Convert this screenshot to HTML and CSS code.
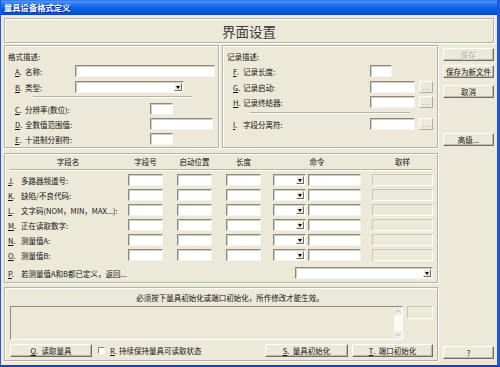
FILE: index.html
```html
<!DOCTYPE html>
<html lang="zh-CN">
<head>
<meta charset="utf-8">
<title>量具设备格式定义</title>
<link rel="stylesheet" href="styles.css">
</head>
<body>
<div class="window">
  <div class="titlebar">量具设备格式定义</div>
  <div class="client">
    <div class="banner">界面设置</div>
    <div class="main">
      <div class="left">
        <div class="top-row">
          <div class="group fmt">
            <div class="gtitle">格式描述:</div>
            <div class="frow mt3"><span class="key"><u>A</u>.</span><span class="lbl-a">名称:</span><div class="field w140"></div></div>
            <div class="frow mt4"><span class="key"><u>B</u>.</span><span class="lbl-a">类型:</span><div class="field sel w109"><span class="arrow"></span></div></div>
            <div class="sep sep-fmt"></div>
            <div class="frow mt5"><span class="key"><u>C</u>.</span><span class="lbl-c">分辨率(数位):</span><div class="field w23"></div></div>
            <div class="frow mt3"><span class="key"><u>D</u>.</span><span class="lbl-c">全数值范围值:</span><div class="field w63"></div></div>
            <div class="frow mt3"><span class="key"><u>E</u>.</span><span class="lbl-c">十进制分割符:</span><div class="field w23"></div></div>
          </div>
          <div class="group rec">
            <div class="gtitle rtitle">记录描述:</div>
            <div class="frow mt3"><span class="key"><u>F</u>.</span><span class="lbl-r">记录长度:</span><div class="field w22"></div></div>
            <div class="frow mt4"><span class="key"><u>G</u>.</span><span class="lbl-r">记录启动:</span><div class="field w45"></div><div class="dots">...</div></div>
            <div class="frow mt3"><span class="key"><u>H</u>.</span><span class="lbl-r">记录终结器:</span><div class="field w45"></div><div class="dots">...</div></div>
            <div class="sep sep-rec"></div>
            <div class="frow mt4"><span class="key"><u>I</u>.</span><span class="lbl-r">字段分离符:</span><div class="field w45"></div><div class="dots">...</div></div>
          </div>
        </div>

        <div class="group table">
          <div class="thead">
            <span class="h h-name">字段名</span>
            <span class="h h-35">字段号</span>
            <span class="h h-35">启动位置</span>
            <span class="h h-35">长度</span>
            <span class="h h-cmd">命令</span>
            <span class="h h-samp">取样</span>
          </div>
          <div class="tline"></div>
          <div class="tgrid">
            <div class="tlabel"><span class="tkey"><u>J</u>.</span>多路器频道号:</div>
            <div class="field w35"></div><div class="field w35"></div><div class="field w35"></div>
            <div class="field sel w33"><span class="arrow"></span></div><div class="field w53"></div><div class="field off w61"></div>

            <div class="tlabel"><span class="tkey"><u>K</u>.</span>缺陷/不良代码:</div>
            <div class="field w35"></div><div class="field w35"></div><div class="field w35"></div>
            <div class="field sel w33"><span class="arrow"></span></div><div class="field w53"></div><div class="field off w61"></div>

            <div class="tlabel"><span class="tkey"><u>L</u>.</span>文字码(NOM，MIN，MAX...):</div>
            <div class="field w35"></div><div class="field w35"></div><div class="field w35"></div>
            <div class="field sel w33"><span class="arrow"></span></div><div class="field w53"></div><div class="field off w61"></div>

            <div class="tlabel"><span class="tkey"><u>M</u>.</span>正在读取数字:</div>
            <div class="field w35"></div><div class="field w35"></div><div class="field w35"></div>
            <div class="field sel w33"><span class="arrow"></span></div><div class="field w53"></div><div class="field off w61"></div>

            <div class="tlabel"><span class="tkey"><u>N</u>.</span>测量值A:</div>
            <div class="field w35"></div><div class="field w35"></div><div class="field w35"></div>
            <div class="field sel w33"><span class="arrow"></span></div><div class="field w53"></div><div class="field off w61"></div>

            <div class="tlabel"><span class="tkey"><u>O</u>.</span>测量值B:</div>
            <div class="field w35"></div><div class="field w35"></div><div class="field w35"></div>
            <div class="field sel w33"><span class="arrow"></span></div><div class="field w53"></div><div class="field off w61"></div>
          </div>
          <div class="prow">
            <span class="tkey"><u>P</u>.</span><span class="ptext">若测量值A和B都已定义，返回...</span>
            <div class="field sel w138"><span class="arrow"></span></div>
          </div>
        </div>

        <div class="group bottom">
          <div class="msg">必须按下量具初始化或端口初始化，所作修改才能生效。</div>
          <div class="log-row">
            <div class="log">
              <div class="log-area"></div>
              <div class="vscroll">
                <div class="sbtn"><svg width="6" height="4" viewBox="0 0 6 4"><path d="M0.5 3.5 L3 1 L5.5 3.5" fill="none" stroke="#b8b8c8" stroke-width="1"/></svg></div>
                <div class="strack"></div>
                <div class="sbtn"><svg width="6" height="4" viewBox="0 0 6 4"><path d="M0.5 0.5 L3 3 L5.5 0.5" fill="none" stroke="#b8b8c8" stroke-width="1"/></svg></div>
              </div>
            </div>
            <div class="field off smallbox"></div>
          </div>
          <div class="btn-row">
            <div class="btn b-read"><u>Q</u>.&nbsp; 读取量具</div>
            <div class="check"></div>
            <span class="ckey"><u>R</u>.</span><span class="ctext">持续保持量具可读取状态</span>
            <div class="btn b-init"><u>S</u>.&nbsp; 量具初始化</div>
            <div class="btn b-port"><u>T</u>.&nbsp; 端口初始化</div>
          </div>
        </div>
      </div>

      <div class="side">
        <div class="btn disabled s-save">保存</div>
        <div class="btn s-saveas">保存为新文件</div>
        <div class="btn s-cancel">取消</div>
        <div class="btn s-adv">高级...</div>
        <div class="btn s-help">?</div>
      </div>
    </div>
  </div>
</div>
</body>
</html>
```
FILE: styles.css
```css
* { box-sizing: border-box; }
html, body { margin: 0; padding: 0; }
body {
  width: 500px;
  height: 367px;
  overflow: hidden;
  background: #ECE9D8;
  font-family: "Noto Sans CJK SC", "Noto Sans", sans-serif;
  font-size: 7.5px;
  color: #111;
}
u { text-decoration: underline; text-underline-offset: 1px; }

.window {
  width: 500px;
  height: 367px;
  display: flex;
  flex-direction: column;
  border-left: 1px solid #1c5ad8;
  border-right: 3px solid #1a5ad9;
  border-bottom: 2px solid #0c45c6;
}
.titlebar {
  flex: none;
  height: 15px;
  padding-left: 3px;
  line-height: 15px;
  color: #fff;
  font-weight: bold;
  font-size: 8.3px;
  text-shadow: 1px 1px 0 #0a2a8a;
  background: linear-gradient(to bottom, #2a74ee 0%, #4d97fb 12%, #2c7af4 25%, #0a5ee6 55%, #0655e0 85%, #0347c8 100%);
}
.client {
  flex: 1;
  display: flex;
  flex-direction: column;
  gap: 2px;
  padding: 3px 3px 4px 3px;
}
.banner {
  flex: none;
  height: 25px;
  display: flex;
  align-items: center;
  justify-content: center;
  font-size: 13.5px;
  color: #3a3a3a;
  border: 1px solid #b6b3a4;
  box-shadow: inset 1px 1px 0 #fff, 1px 1px 0 #fff;
}
.main {
  flex: 1;
  display: grid;
  grid-template-columns: 434px 51px;
  column-gap: 5px;
}
.left { display: flex; flex-direction: column; }
.top-row { display: flex; gap: 3px; height: 103px; flex: none; }

.group {
  border: 1px solid #b6b3a4;
  box-shadow: inset 1px 1px 0 #fff, 1px 1px 0 #fff;
}
.fmt { width: 215px; }
.rec { width: 216px; }
.table { height: 130px; margin-top: 5px; flex: none; }
.bottom { height: 74px; margin-top: 4px; flex: none; }

.gtitle { height: 10px; line-height: 10px; margin: 6px 0 0 3px; }
.rtitle { margin-left: 4px; }

.frow { display: flex; align-items: center; height: 12px; margin-left: 10px; }
.mt3 { margin-top: 3px; }
.mt4 { margin-top: 4px; }
.mt5 { margin-top: 5px; }
.key { width: 10px; flex: none; }
.lbl-a { width: 50px; flex: none; }
.lbl-c { width: 125px; flex: none; }
.lbl-r { width: 127px; flex: none; }

.sep { height: 2px; border-top: 1px solid #b6b3a4; border-bottom: 1px solid #fff; }
.sep-fmt { margin: 3px 0 0 28px; width: 159px; }
.sep-rec { margin: 4px 0 0 27px; width: 160px; }

.field {
  flex: none;
  height: 12px;
  background: #fff;
  border: 1px solid;
  border-color: #8d8a7e #f4f3ee #f4f3ee #8d8a7e;
  box-shadow: inset 1px 1px 0 #cfccc0;
}
.field.off { background: #ECE9D8; border-color: #c9c6b8 #fff #fff #c9c6b8; box-shadow: none; }
.sel { display: flex; justify-content: flex-end; padding: 1px; }
.arrow {
  width: 8px;
  height: 100%;
  display: flex;
  align-items: center;
  justify-content: center;
  background: #ECE9D8;
  border: 1px solid;
  border-color: #fff #6f6d64 #6f6d64 #fff;
}
.arrow::after {
  content: "";
  border-left: 2.5px solid transparent;
  border-right: 2.5px solid transparent;
  border-top: 3px solid #000;
}
.w22 { width: 22px; }
.w23 { width: 23px; }
.w33 { width: 33px; }
.w35 { width: 35px; }
.w45 { width: 45px; }
.w53 { width: 53px; }
.w61 { width: 61px; }
.w63 { width: 63px; }
.w109 { width: 109px; }
.w138 { width: 138px; }
.w140 { width: 140px; }

.dots {
  flex: none;
  width: 14px;
  height: 12px;
  margin-left: 4px;
  display: flex;
  align-items: center;
  justify-content: center;
  color: #9a988e;
  font-size: 7px;
  letter-spacing: 0.5px;
  border: 1px solid;
  border-color: #fff #b0ad9f #b0ad9f #fff;
}

.thead {
  display: flex;
  height: 10px;
  line-height: 10px;
  margin: 3px 0 0 3px;
}
.h { text-align: center; flex: none; }
.h-name { width: 120px; }
.h-35 { width: 35px; margin-right: 14px; }
.h-35:nth-child(4) { margin-right: 12px; }
.h-cmd { width: 88px; margin-right: 11px; }
.h-samp { width: 61px; }
.tline { margin: 2px 5px 0 5px; height: 2px; border-top: 1px solid #b6b3a4; border-bottom: 1px solid #fff; }
.tgrid {
  display: grid;
  grid-template-columns: 120px 49px 49px 47px 35px 64px 61px;
  grid-auto-rows: 12px;
  row-gap: 3px;
  margin: 3px 0 0 3px;
}
.tlabel { display: flex; align-items: center; white-space: nowrap; }
.tkey { width: 13px; flex: none; }
.prow { display: flex; align-items: center; height: 12px; margin: 6px 4px 0 3px; }
.ptext { flex: 1; }

.msg { height: 10px; line-height: 10px; margin-top: 5px; padding-left: 18px; text-align: center; }
.log-row { display: flex; height: 34px; margin: 3px 0 0 5px; }
.log {
  width: 393px;
  display: flex;
  border: 1px solid;
  border-color: #8d8a7e #fff #fff #8d8a7e;
}
.log-area { flex: 1; }
.vscroll { width: 8px; display: flex; flex-direction: column; background: #f7f6f2; }
.sbtn { height: 8px; display: flex; align-items: center; justify-content: center; background: #eeede6; }
.strack { flex: 1; background: #fbfbf8; }
.smallbox { width: 26px; height: 13px; margin-left: 4px; }

.btn-row { display: flex; align-items: center; height: 13px; margin: 4px 4px 0 5px; }
.btn {
  flex: none;
  height: 13px;
  display: flex;
  align-items: center;
  justify-content: center;
  background: #ECE9D8;
  border: 1px solid;
  border-color: #fff #6f6d64 #6f6d64 #fff;
  box-shadow: inset -1px -1px 0 #bdbaab;
  white-space: nowrap;
  line-height: 11px;
}
.btn.disabled { color: #aca899; text-shadow: 1px 1px 0 #fff; }
.b-read { width: 82px; }
.check {
  flex: none;
  width: 7px;
  height: 7px;
  margin-left: 6px;
  background: #fff;
  border: 1px solid;
  border-color: #8d8a7e #fff #fff #8d8a7e;
}
.ckey { margin-left: 5px; width: 9px; flex: none; }
.b-init { width: 83px; margin-left: auto; }
.b-port { width: 81px; margin-left: 4px; }

.side { display: flex; flex-direction: column; }
.s-save { margin-top: 3px; }
.s-saveas { margin-top: 4px; }
.s-cancel { margin-top: 7px; }
.s-adv { margin-top: 35px; }
.s-help { margin-top: auto; margin-bottom: 2px; }
```
